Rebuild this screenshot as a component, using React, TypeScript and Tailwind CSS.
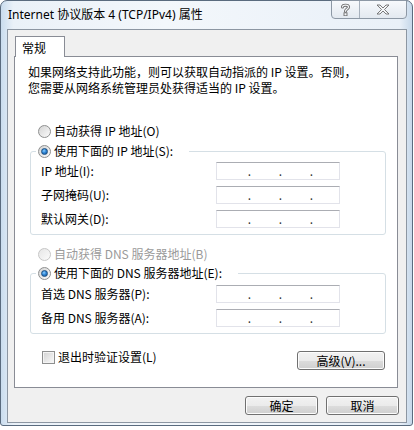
import React from "react";

const Radio = ({ checked = false, disabled = false }: { checked?: boolean; disabled?: boolean }) => (
  <span
    className={
      "w-[13px] h-[13px] rounded-full border flex items-center justify-center shrink-0 " +
      (disabled
        ? "border-[#c6c6c6] bg-[linear-gradient(135deg,#e6e6e6,#fbfbfb)]"
        : "border-[#8e8f8f] bg-[linear-gradient(135deg,#d4d4d4,#fbfbfb)]")
    }
  >
    {checked && (
      <span className="w-[7px] h-[7px] rounded-full bg-[radial-gradient(circle_at_40%_35%,#8fd0ff_0%,#2f86d6_45%,#124f94_100%)] border border-[#1d4f80]" />
    )}
  </span>
);

const IpField = () => (
  <div className="w-[124px] h-[18px] bg-white border border-[#e2e3ea] border-t-[#abadb3] flex items-end pb-[2px] text-[12px] leading-[12px] text-[#333]">
    <span className="w-[34px] text-right">.</span>
    <span className="w-[31px] text-right">.</span>
    <span className="w-[31px] text-right">.</span>
  </div>
);

const Row = ({ label }: { label: string }) => (
  <div className="flex items-center h-[18px]">
    <span className="w-[185px] pl-[10px] text-[12px] leading-[18px]">{label}</span>
    <IpField />
  </div>
);

const Button = ({ label, w }: { label: string; w: string }) => (
  <div
    className={
      w +
      " h-[19px] rounded-[3px] border border-[#707070] bg-[linear-gradient(#f2f2f2_0%,#ebebeb_50%,#dddddd_50%,#cfcfcf_100%)] shadow-[inset_0_0_0_1px_#fcfcfc] flex items-center justify-center text-[12px] leading-[12px] text-black"
    }
  >
    {label}
  </div>
);

export default function App() {
  return (
    <div className="w-[414px] h-[430px] bg-white overflow-hidden font-['Noto_Sans_CJK_SC',sans-serif] text-black">
      <div className="w-[413px] h-[426px] rounded-t-[7px] rounded-b-[3px] border border-[#5a6b7e] bg-[linear-gradient(90deg,#c9dcee_0%,#eaf1f8_3%,#f3f7fb_40%,#e9f0f8_97%,#c6d8ea_100%)] flex flex-col relative">
        {/* title bar */}
        <div className="h-[28px] flex items-start justify-between pl-[7px]">
          <span className="mt-[6px] text-[12px] leading-[16px] font-['Noto_Sans','Noto_Sans_CJK_SC',sans-serif] text-black">
            Internet 协议版本 4 (TCP/IPv4) 属性
          </span>
          <div className="flex h-[19px] mr-[5px] -mt-px border border-[#8d98a5] rounded-b-[4px] bg-[linear-gradient(#f7f9fc,#e3e9f0)] overflow-hidden">
            <div className="w-[28px] flex items-center justify-center border-r border-[#a6b0bc]">
              <svg width="9" height="13" viewBox="0 0 9 13">
                <path d="M1.5 4 C1.5 1.5 7.5 1.5 7.5 4 C7.5 6 4.5 6 4.5 8.2" fill="none" stroke="#6c6c6c" strokeWidth="3" strokeLinecap="round" />
                <path d="M1.5 4 C1.5 1.5 7.5 1.5 7.5 4 C7.5 6 4.5 6 4.5 8.2" fill="none" stroke="#f4f6f9" strokeWidth="1.2" strokeLinecap="round" />
                <rect x="3" y="9.8" width="3" height="3" fill="#f4f6f9" stroke="#6c6c6c" strokeWidth="0.9" />
              </svg>
            </div>
            <div className="w-[46px] flex items-center justify-center">
              <svg width="14" height="11" viewBox="0 0 14 11">
                <polygon
                  points="1,1 4,1 7,4 10,1 13,1 8.5,5.5 13,10 10,10 7,7 4,10 1,10 5.5,5.5"
                  fill="#f4f6f9"
                  stroke="#6c6c6c"
                  strokeWidth="0.9"
                  strokeLinejoin="round"
                />
              </svg>
            </div>
          </div>
        </div>

        {/* client area */}
        <div className="ml-[6px] w-[400px] h-[394px] border border-[#8c96a2] bg-[#f0f0f0] flex flex-col px-[6px] pt-[6px]">
          {/* tab */}
          <div className="ml-px w-[50px] h-[21px] bg-white border border-b-0 border-[#898c95] -mb-px relative z-10 text-[12px] leading-[12px] flex items-center pl-[6px] pt-[1px]">
            常规
          </div>
          {/* panel */}
          <div className="w-[384px] h-[332px] bg-white border border-[#898c95] flex flex-col text-[12px]">
            <div className="mt-[7px] pl-[13px] flex flex-col">
              <div className="h-[16px] leading-[16px] whitespace-nowrap">如果网络支持此功能，则可以获取自动指派的 IP 设置。否则，</div>
              <div className="h-[16px] leading-[16px] whitespace-nowrap">您需要从网络系统管理员处获得适当的 IP 设置。</div>
            </div>

            <div className="mt-[25px] ml-[23px] h-[20px] flex items-center gap-[3px]">
              <Radio />
              <span className="leading-[20px]">自动获得 IP 地址(O)</span>
            </div>

            <div className="mt-[10px] ml-[15px] w-[356px] border border-[#d5dfe5] rounded-[3px] flex flex-col gap-[6px] pb-[6px]">
              <div className="-mt-[11px] ml-[5px] px-[2px] h-[20px] w-fit bg-white flex items-center gap-[3px] pr-[16px]">
                <Radio checked />
                <span className="leading-[20px]">使用下面的 IP 地址(S):</span>
              </div>
              <div className="-mt-[5px] flex flex-col gap-[6px]">
                <Row label="IP 地址(I):" />
                <Row label="子网掩码(U):" />
                <Row label="默认网关(D):" />
              </div>
            </div>

            <div className="mt-[9px] ml-[23px] h-[20px] flex items-center gap-[3px] text-[#9a9a9a]">
              <Radio disabled />
              <span className="leading-[20px]">自动获得 DNS 服务器地址(B)</span>
            </div>

            <div className="mt-[9px] ml-[15px] w-[356px] border border-[#d5dfe5] rounded-[3px] flex flex-col pb-[6px]">
              <div className="-mt-[11px] ml-[5px] px-[2px] h-[20px] w-fit bg-white flex items-center gap-[3px] pr-[16px]">
                <Radio checked />
                <span className="leading-[20px]">使用下面的 DNS 服务器地址(E):</span>
              </div>
              <div className="mt-[2px] flex flex-col gap-[6px]">
                <Row label="首选 DNS 服务器(P):" />
                <Row label="备用 DNS 服务器(A):" />
              </div>
            </div>

            <div className="mt-[13px] ml-[27px] mr-[12px] flex items-start justify-between">
              <div className="h-[20px] flex items-center gap-[3px]">
                <span className="w-[13px] h-[13px] border border-[#8e8f8f] bg-[linear-gradient(135deg,#d2d2d2,#fafafa)] shadow-[inset_0_0_0_1px_#f4f4f4]" />
                <span className="leading-[20px]">退出时验证设置(L)</span>
              </div>
              <div className="mt-[4px]">
                <Button label="高级(V)..." w="w-[88px]" />
              </div>
            </div>
          </div>

          {/* bottom buttons */}
          <div className="mt-[8px] flex justify-end gap-[8px] pr-[1px]">
            <Button label="确定" w="w-[73px]" />
            <Button label="取消" w="w-[73px]" />
          </div>
        </div>
      </div>
    </div>
  );
}
